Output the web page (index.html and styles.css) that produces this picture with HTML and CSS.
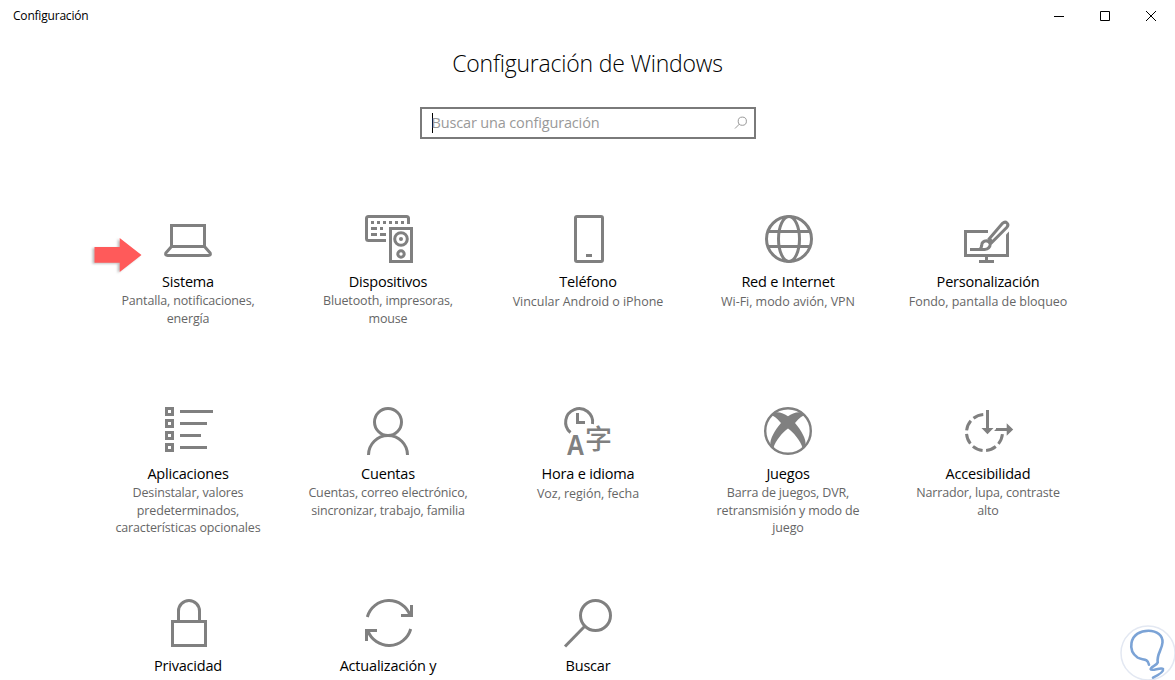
FILE: index.html
```
<!DOCTYPE html>
<html lang="es">
<head>
  <meta charset="utf-8">
  <title>Configuración</title>
  <link rel="stylesheet" href="styles.css">
</head>
<body>
  <div class="titlebar">
    <span class="titlebar-text">Configuración</span>
    <div class="window-controls">
      <svg width="10" height="10" viewBox="0 0 10 10"><path d="M0 5.5h10"/></svg>
      <svg width="10" height="10" viewBox="0 0 10 10"><path d="M.5 .5h9v9h-9z"/></svg>
      <svg width="10" height="10" viewBox="0 0 10 10"><path d="M0 0l10 10M10 0L0 10"/></svg>
    </div>
  </div>

  <div class="header">
    <h1>Configuración de Windows</h1>
    <div class="search">
      <span class="caret"></span>
      <span class="placeholder">Buscar una configuración</span>
      <svg class="search-icon" width="14" height="14" viewBox="0 0 14 14"><circle cx="8.3" cy="5.2" r="4.1"/><path d="M5.4 8.1L1 12.5"/></svg>
    </div>
  </div>

  <div class="grid">
    <div class="tile">
      <svg class="arrow" width="54" height="40" viewBox="0 0 54 40"><path d="M4.500 12H29.700V3L51.500 20L29.700 37V27.700H4.500z"/></svg>
      <svg class="icon" viewBox="0 0 48 48"><path d="M7.500 10.500h33v21h-33zM7.500 31.500L2 37.700q-1.200 2.800 1.600 2.800h40.800q2.800 0 1.600-2.800L40.500 31.500"/></svg>
      <h2>Sistema</h2>
      <p>Pantalla, notificaciones,<br>energía</p>
    </div>

    <div class="tile">
      <svg class="icon" viewBox="0 0 48 48">
        <path d="M22 25.500H4.500q-2 0-2-2v-20q0-2 2-2h38q2 0 2 2V9M26.500 13.500h21v33h-21z"/>
        <path d="M7 7.500h3m3 0h3m3 0h3m3 0h3m3 0h3m3 0h3M7 13.500h6m3 0h3M7 19.500h6m3 0h6"/>
        <circle cx="37" cy="24" r="6.300"/><circle class="fill" cx="37" cy="24" r="2"/>
        <circle cx="37" cy="39" r="3.200"/>
      </svg>
      <h2>Dispositivos</h2>
      <p>Bluetooth, impresoras,<br>mouse</p>
    </div>

    <div class="tile">
      <svg class="icon" viewBox="0 0 48 48"><rect x="11.500" y="1.500" width="27" height="45" rx="1.500"/><path d="M22 40.500h6"/></svg>
      <h2>Teléfono</h2>
      <p class="single">Vincular Android o iPhone</p>
    </div>

    <div class="tile">
      <svg class="icon" viewBox="0 0 48 48"><circle cx="25" cy="24" r="22.500"/><ellipse cx="25" cy="24" rx="10.500" ry="22.500"/><path d="M4 16.500h42M4 31.500h42"/></svg>
      <h2>Red e Internet</h2>
      <p class="single">Wi-Fi, modo avión, VPN</p>
    </div>

    <div class="tile">
      <svg class="icon" viewBox="0 0 48 48">
        <path d="M24 16.500H1.500v24h42V21M22.500 40v6M15 46.500h15"/>
        <path class="fill" d="M42 21.500V19.500L45 16.500V21.500z"/>
        <path d="M25.300 23.700L38.500 8.300q2.500-2.200 4.500-.3t-.3 4.500L28.200 27z"/>
        <path d="M6 34.500h14.500q5.500-.6 5.800-5.500q-.3-3-3.600-3.200q-4.900.2-5 4.700q-.2 2.300-2 4"/>
        <path class="thin" d="M23 25.500l4.500 4"/>
      </svg>
      <h2>Personalización</h2>
      <p class="single">Fondo, pantalla de bloqueo</p>
    </div>

    <div class="tile">
      <svg class="icon" viewBox="0 0 48 48">
        <path d="M2.500 1.500h6v6h-6zM2.500 13.500h6v6h-6zM2.500 25.500h6v6h-6zM2.500 37.500h6v6h-6z"/>
        <path d="M16 4.500h33M16 16.500h27M16 28.500h21M16 40.500h27"/>
      </svg>
      <h2>Aplicaciones</h2>
      <p>Desinstalar, valores<br>predeterminados,<br>características opcionales</p>
    </div>

    <div class="tile">
      <svg class="icon" viewBox="0 0 48 48"><circle cx="24" cy="15" r="13.500"/><path d="M4.500 48a19.500 19.500 0 0 1 39 0"/></svg>
      <h2>Cuentas</h2>
      <p>Cuentas, correo electrónico,<br>sincronizar, trabajo, familia</p>
    </div>

    <div class="tile">
      <svg class="icon" viewBox="0 0 48 48">
        <path d="M6.500 25.500A13.500 13.500 0 1 1 28.500 17M13.500 6v9.500H21"/>
        <text class="glyph-a" x="2.500" y="48" textLength="18" lengthAdjust="spacingAndGlyphs">A</text>
        <text class="glyph-zi" x="21" y="42.300">字</text>
      </svg>
      <h2>Hora e idioma</h2>
      <p class="single">Voz, región, fecha</p>
    </div>

    <div class="tile">
      <svg class="icon" viewBox="0 0 48 48">
        <circle class="thin" cx="24" cy="24" r="22.800"/>
        <path class="fill" d="M9 6C14 4 20 6.500 24 9.300C28 6.500 34 4 39 6L40.500 8.500C37 9 34 12.500 31 16C37 23 42.500 32 41.500 38L38.500 41C37 34 29 25 24 21.500C19 25 11 34 9.500 41L6.500 38C5.500 32 11 23 17 16C14 12.500 11 9 7.500 8.500z"/>
      </svg>
      <h2>Juegos</h2>
      <p>Barra de juegos, DVR,<br>retransmisión y modo de<br>juego</p>
    </div>

    <div class="tile">
      <svg class="icon" viewBox="0 0 48 48">
        <path class="dashed" d="M38.500 25.500A18 18 0 1 1 20.500 7.500"/>
        <path d="M23.500 3v19M32 22.500h12"/>
        <path class="fill" d="M17.500 21h12l-6 6.300zM42.700 16.200l6.500 6.300l-6.500 6.300zM30 24l3-3v3z"/>
      </svg>
      <h2>Accesibilidad</h2>
      <p>Narrador, lupa, contraste<br>alto</p>
    </div>

    <div class="tile">
      <svg class="icon" viewBox="0 0 48 48"><path d="M8.500 22.500h33v24h-33zM14.500 22V12a10.500 10.500 0 0 1 21 0v10"/></svg>
      <h2>Privacidad</h2>
    </div>

    <div class="tile">
      <svg class="icon" viewBox="0 0 48 48">
        <path d="M3.300 18A22.500 22.500 0 0 1 46.200 16.500M47.500 6v10.500H37M46.700 30A22.500 22.500 0 0 1 3.800 31.500M2.500 42V31.500H13"/>
      </svg>
      <h2>Actualización y</h2>
    </div>

    <div class="tile">
      <svg class="icon" viewBox="0 0 48 48"><circle cx="31.500" cy="16.500" r="15"/><path d="M1 47.500L21 27"/></svg>
      <h2>Buscar</h2>
    </div>
  </div>

  <svg class="watermark" width="55" height="55" viewBox="0 0 55 55">
    <circle cx="28" cy="28" r="27"/>
    <path d="M29 39.700C27.500 32.500 22 35.500 17.500 32.500C12.500 29 10.500 23.500 11.500 18C13 9.500 20.500 5.700 28.500 5.700C37 5.700 43 10.500 42.500 17.500C42 25 36.500 29 37.700 37.500C36.500 41 30.500 41.500 30.700 44.300C31.500 46.500 41 42 43 44C44 47 37.500 50.500 33 52.700"/>
  </svg>
</body>
</html>
```
FILE: styles.css
```
body {
  width: 1175px;
  height: 680px;
  margin: 0;
  overflow: hidden;
  position: relative;
  font-family: "Open Sans", "Noto Sans", sans-serif;
  background: #fff;
  color: #000;
}

.titlebar {
  display: flex;
  justify-content: space-between;
  align-items: center;
  height: 32px;
  padding: 0 19px 0 13px;
}

.titlebar-text {
  padding-bottom: 2px;
  font-size: 12px;
  letter-spacing: -0.2px;
}

.window-controls {
  display: flex;
  gap: 36px;
}

.window-controls svg {
  fill: none;
  stroke: #000;
  stroke-width: 1;
}

.header {
  display: flex;
  flex-direction: column;
  align-items: center;
  height: 183px;
}

.header h1 {
  margin: 15px 0 28px;
  font-size: 23px;
  line-height: 32px;
  font-weight: 300;
  letter-spacing: -0.2px;
}

.search {
  display: flex;
  align-items: center;
  box-sizing: border-box;
  width: 336px;
  height: 32px;
  padding: 0 6px 0 10px;
  border: 2px solid #7a7a7a;
}

.caret {
  width: 1px;
  height: 20px;
  margin-right: -1px;
  background: #000;
}

.placeholder {
  flex: 1;
  padding-bottom: 2px;
  font-size: 14.5px;
  letter-spacing: -0.15px;
  color: #999;
}

.search-icon {
  fill: none;
  stroke: #999;
  stroke-width: 1;
}

.grid {
  display: grid;
  grid-template-columns: repeat(5, 200px);
  grid-template-rows: 192px 192px 81px;
  padding-left: 88px;
}

.tile {
  position: relative;
  display: flex;
  flex-direction: column;
  align-items: center;
  text-align: center;
}

.icon {
  width: 48px;
  height: 48px;
  overflow: visible;
  fill: none;
  stroke: #808080;
  stroke-width: 3;
}

.icon .fill {
  fill: #808080;
  stroke: none;
}

.icon .thin {
  stroke-width: 2.4;
}

.icon .dashed {
  stroke-dasharray: 10.5 3.64;
  stroke-dashoffset: -1.8;
}

.icon text {
  fill: #808080;
  stroke: none;
}

.glyph-a {
  font-family: "Liberation Sans", sans-serif;
  font-size: 30px;
  font-weight: 700;
}

.glyph-zi {
  font-family: "Noto Sans CJK SC", sans-serif;
  font-size: 27px;
  font-weight: 500;
}

.tile h2 {
  margin: 9px 0 0;
  font-size: 14.5px;
  line-height: 20px;
  font-weight: 400;
  letter-spacing: -0.2px;
  white-space: nowrap;
}

.tile p {
  margin: 0;
  font-size: 12.5px;
  line-height: 17.5px;
  letter-spacing: -0.15px;
  color: #666;
  white-space: nowrap;
}

.tile p.single {
  padding-top: 1px;
  letter-spacing: -0.04px;
}

/* pointer lying over the first tile */
.arrow {
  position: absolute;
  left: 2px;
  top: 20px;
  fill: #ff5a5a;
  filter: drop-shadow(-2px 1px 1px rgba(0, 0, 0, 0.25));
}

.watermark {
  position: absolute;
  right: 0;
  bottom: 0;
  fill: none;
  stroke: #7ba3d6;
  stroke-width: 2.6;
  stroke-linecap: round;
}

.watermark circle {
  stroke: #e3e8f2;
  stroke-width: 1.5;
}
```
